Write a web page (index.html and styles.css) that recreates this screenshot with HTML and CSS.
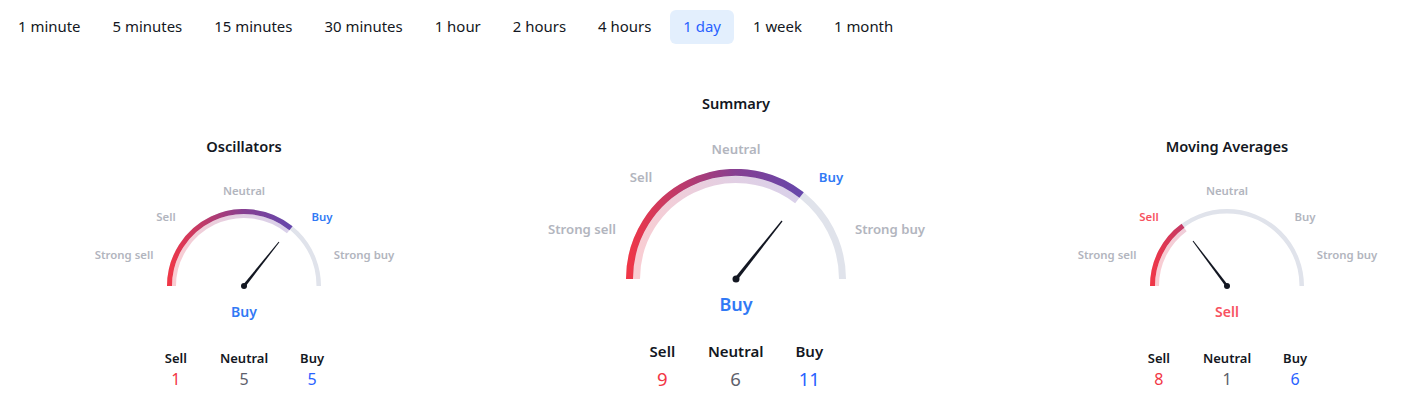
FILE: index.html
```html
<!DOCTYPE html>
<html lang="en">
<head>
<meta charset="utf-8">
<title>Technical analysis</title>
<link rel="stylesheet" href="styles.css">
</head>
<body>
<nav class="tabs">
  <button class="tab">1 minute</button>
  <button class="tab">5 minutes</button>
  <button class="tab">15 minutes</button>
  <button class="tab">30 minutes</button>
  <button class="tab">1 hour</button>
  <button class="tab">2 hours</button>
  <button class="tab">4 hours</button>
  <button class="tab tab-active">1 day</button>
  <button class="tab">1 week</button>
  <button class="tab">1 month</button>
</nav>
<main class="gauges">
  <section class="panel panel-small">
    <h2 class="title">Oscillators</h2>
    <div class="gauge">
      <svg class="dial" viewBox="0 0 154 80" width="154" height="80" aria-hidden="true">
        <defs><linearGradient id="g1" gradientUnits="userSpaceOnUse" x1="0" y1="0" x2="154" y2="0"><stop offset="0" stop-color="#f23645"/><stop offset=".5" stop-color="#863f92"/><stop offset="1" stop-color="#514cbc"/></linearGradient></defs>
        <path class="track" d="M2.25 77A74.75 74.75 0 0 1 151.75 77" stroke-width="4.5"/>
        <path class="pale" stroke="url(#g1)" d="M7 77A70 70 0 0 1 121.2 22.7" stroke-width="4"/>
        <path class="fill" stroke="url(#g1)" d="M2.5 77A74.5 74.5 0 0 1 124 19.2" stroke-width="5"/>
        <path class="needle" d="M75.9 76.1L111.6 32.7 112.4 33.3 78.1 77.9Z"/>
        <circle class="hub" cx="77" cy="77" r="3"/>
      </svg>
      <span class="lbl s-ssell">Strong sell</span>
      <span class="lbl s-sell">Sell</span>
      <span class="lbl s-neutral">Neutral</span>
      <span class="lbl s-buy on-buy">Buy</span>
      <span class="lbl s-sbuy">Strong buy</span>
    </div>
    <div class="verdict buy">Buy</div>
    <div class="counts">
      <div class="count"><span class="count-k">Sell</span><span class="count-v sell">1</span></div>
      <div class="count"><span class="count-k">Neutral</span><span class="count-v neutral">5</span></div>
      <div class="count"><span class="count-k">Buy</span><span class="count-v buy">5</span></div>
    </div>
  </section>
  <section class="panel panel-big">
    <h2 class="title">Summary</h2>
    <div class="gauge">
      <svg class="dial" viewBox="0 0 220 114" width="220" height="114" aria-hidden="true">
        <defs><linearGradient id="g2" gradientUnits="userSpaceOnUse" x1="0" y1="0" x2="220" y2="0"><stop offset="0" stop-color="#f23645"/><stop offset=".5" stop-color="#863f92"/><stop offset="1" stop-color="#514cbc"/></linearGradient></defs>
        <path class="track" d="M3.5 110A106.5 106.5 0 0 1 216.5 110" stroke-width="7"/>
        <path class="pale" stroke="url(#g2)" d="M10.5 110A99.5 99.5 0 0 1 171.3 31.6" stroke-width="7"/>
        <path class="fill" stroke="url(#g2)" d="M3.5 110A106.5 106.5 0 0 1 175.6 26" stroke-width="7"/>
        <path class="needle" d="M108.6 108.9L155.5 51.6 156.5 52.4 111.4 111.1Z"/>
        <circle class="hub" cx="110" cy="110" r="3.5"/>
      </svg>
      <span class="lbl b-ssell">Strong sell</span>
      <span class="lbl b-sell">Sell</span>
      <span class="lbl b-neutral">Neutral</span>
      <span class="lbl b-buy on-buy">Buy</span>
      <span class="lbl b-sbuy">Strong buy</span>
    </div>
    <div class="verdict buy">Buy</div>
    <div class="counts">
      <div class="count"><span class="count-k">Sell</span><span class="count-v sell">9</span></div>
      <div class="count"><span class="count-k">Neutral</span><span class="count-v neutral">6</span></div>
      <div class="count"><span class="count-k">Buy</span><span class="count-v buy">11</span></div>
    </div>
  </section>
  <section class="panel panel-small">
    <h2 class="title">Moving Averages</h2>
    <div class="gauge">
      <svg class="dial" viewBox="0 0 154 80" width="154" height="80" aria-hidden="true">
        <defs><linearGradient id="g3" gradientUnits="userSpaceOnUse" x1="0" y1="0" x2="154" y2="0"><stop offset="0" stop-color="#f23645"/><stop offset=".5" stop-color="#863f92"/><stop offset="1" stop-color="#514cbc"/></linearGradient></defs>
        <path class="track" d="M2.25 77A74.75 74.75 0 0 1 151.75 77" stroke-width="4.5"/>
        <path class="pale" stroke="url(#g3)" d="M7 77A70 70 0 0 1 35.5 20.6" stroke-width="4"/>
        <path class="fill" stroke="url(#g3)" d="M2.5 77A74.5 74.5 0 0 1 33 16.8" stroke-width="5"/>
        <path class="needle" d="M75.9 77.85L42.6 32.3 43.4 31.7 78.1 76.15Z"/>
        <circle class="hub" cx="77" cy="77" r="3"/>
      </svg>
      <span class="lbl s-ssell">Strong sell</span>
      <span class="lbl s-sell on-sell">Sell</span>
      <span class="lbl s-neutral">Neutral</span>
      <span class="lbl s-buy">Buy</span>
      <span class="lbl s-sbuy">Strong buy</span>
    </div>
    <div class="verdict sell">Sell</div>
    <div class="counts">
      <div class="count"><span class="count-k">Sell</span><span class="count-v sell">8</span></div>
      <div class="count"><span class="count-k">Neutral</span><span class="count-v neutral">1</span></div>
      <div class="count"><span class="count-k">Buy</span><span class="count-v buy">6</span></div>
    </div>
  </section>
</main>
</body>
</html>
```
FILE: styles.css
```css
* { box-sizing: border-box; }
html, body { margin: 0; padding: 0; }
body {
  width: 1407px;
  height: 408px;
  overflow: hidden;
  background: #fff;
  color: #131722;
  font-family: "Noto Sans", "Open Sans", sans-serif;
}
.tabs {
  display: flex;
  gap: 6px;
  padding: 10px 0 0 5px;
  height: 44px;
}
.tab {
  height: 34px;
  padding: 0 13px 2px;
  border: 0;
  border-radius: 6px;
  background: transparent;
  color: #131722;
  font: 400 14.95px/32px "Noto Sans", "Open Sans", sans-serif;
  white-space: nowrap;
}
.tab-active { background: #e3effd; color: #2962ff; }

.gauges {
  display: flex;
  justify-content: space-between;
  align-items: flex-end;
  padding: 0 30px 0 94px;
  height: 346px;
}
.panel { display: flex; flex-direction: column; align-items: center; }
.panel-small { width: 300px; }
.panel-big { width: 401px; padding-left: 1px; }
.title { margin: 0; font-weight: 600; color: #131722; white-space: nowrap; font-size: 14.6px; line-height: 20px; }

.gauge { position: relative; }
.panel-small .gauge { width: 300px; height: 80px; margin-top: 53px; }
.panel-big .gauge { width: 400px; height: 112px; margin-top: 56px; }
.dial { display: block; margin: 0 auto; }
.track { fill: none; stroke: #e0e3eb; }
.fill { fill: none; }
.pale { fill: none; opacity: .25; }
.needle { fill: #131722; }
.hub { fill: #131722; }

.lbl { position: absolute; color: #b2b5be; font-weight: 600; white-space: nowrap; line-height: 14px; transform: translateX(-50%); }
.on-buy { color: #3179f5; }
.on-sell { color: #f7525f; }
.panel-small .lbl { font-size: 11.4px; }
.panel-big .lbl { font-size: 13.2px; }
.s-ssell { left: 30px; top: 39px; }
.s-sell { left: 72px; top: 1px; }
.s-neutral { left: 150px; top: -25px; }
.s-buy { left: 228px; top: 1px; }
.s-sbuy { left: 270px; top: 39px; }
.b-ssell { left: 46px; top: 53px; }
.b-sell { left: 105px; top: 1px; }
.b-neutral { left: 200px; top: -27px; }
.b-buy { left: 295px; top: 1px; }
.b-sbuy { left: 354px; top: 53px; }

.verdict { font-weight: 600; text-align: center; }
.verdict.buy { color: #3179f5; }
.verdict.sell { color: #f7525f; }
.panel-small .verdict { font-size: 14px; line-height: 20px; margin-top: 13px; }
.panel-big .verdict { font-size: 18px; line-height: 24px; margin-top: 11px; }

.counts { display: flex; justify-content: center; }
.panel-small .counts { gap: 32px; margin-top: 28px; }
.panel-big .counts { gap: 32px; margin-top: 25px; }
.count { display: flex; flex-direction: column; align-items: center; }
.panel-small .count { min-width: 24px; }
.panel-big .count { min-width: 27px; }
.count-k { font-weight: 600; color: #131722; }
.panel-small .count-k { font-size: 13px; line-height: 16px; margin-bottom: 2px; }
.panel-big .count-k { font-size: 15px; line-height: 20px; margin-bottom: 7px; }
.panel-small .count-v { font-size: 16px; line-height: 22px; }
.panel-big .count-v { font-size: 18.5px; line-height: 22px; }
.count-v.sell { color: #f23645; }
.count-v.neutral { color: #5d606b; }
.count-v.buy { color: #2962ff; }
```
